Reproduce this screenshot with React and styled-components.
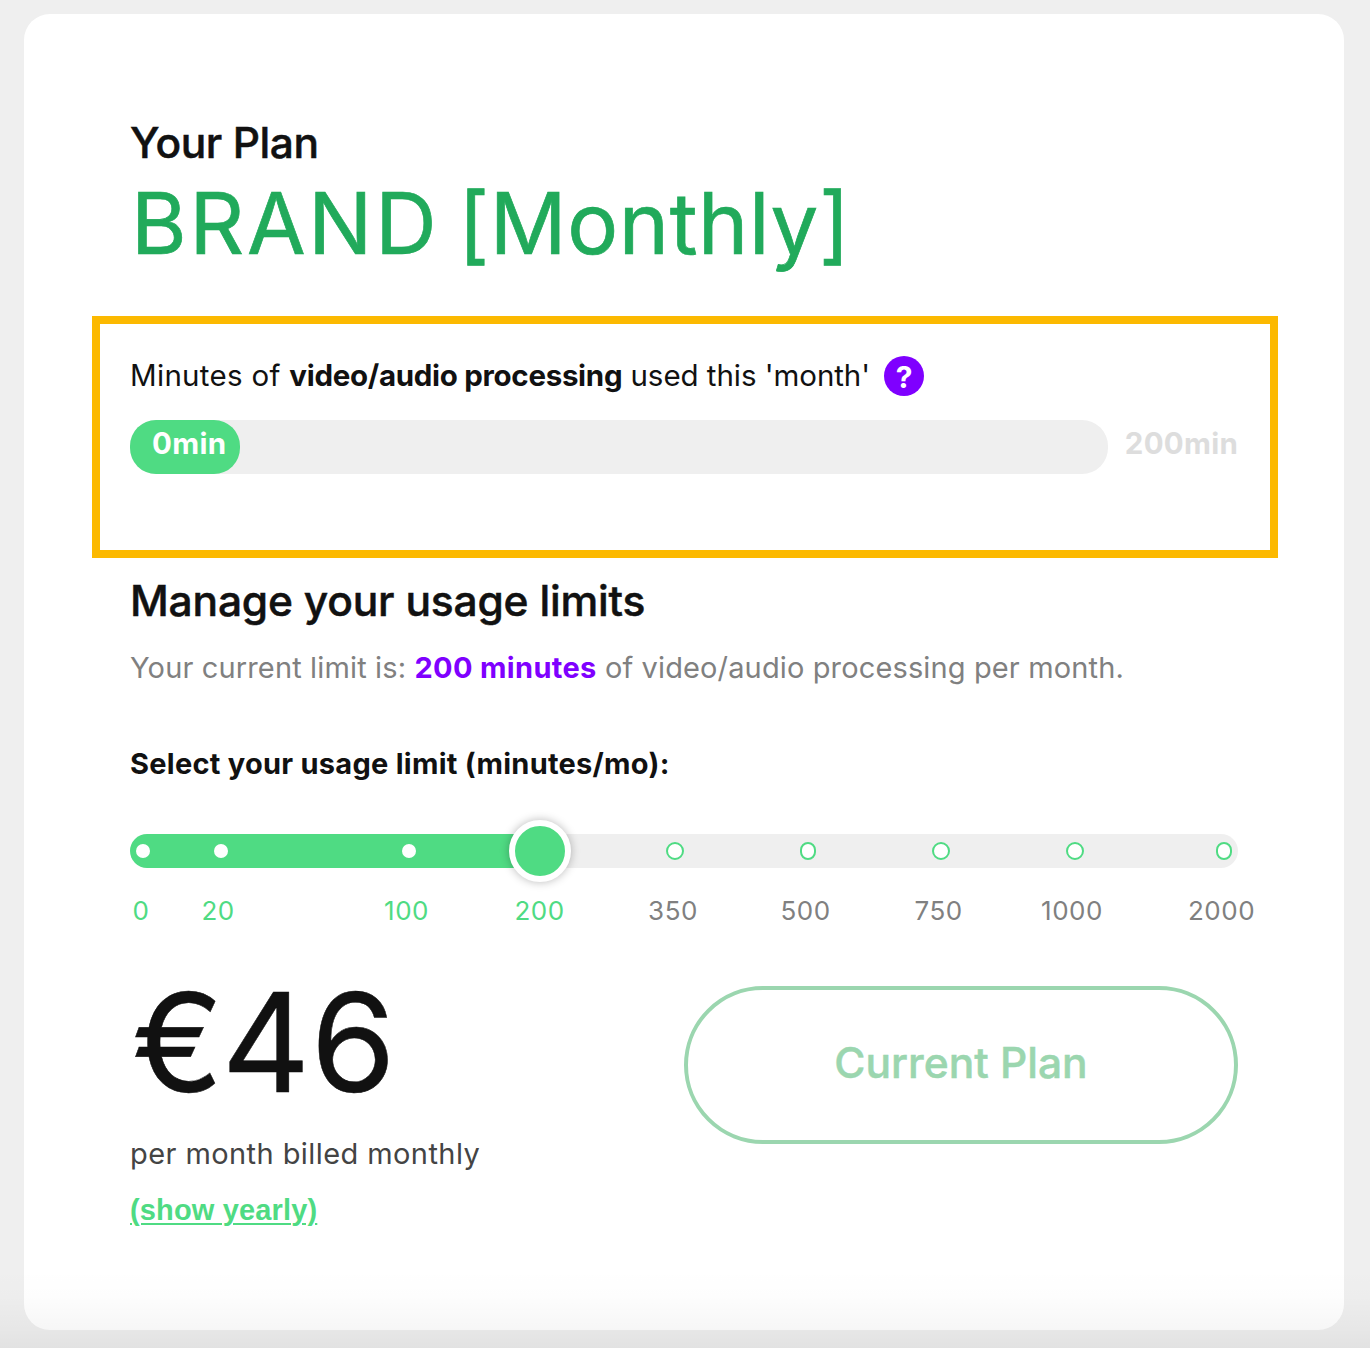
import React from "react";
import styled, { createGlobalStyle } from "styled-components";

const GlobalStyle = createGlobalStyle`
  *, *::before, *::after { box-sizing: border-box; }
  body {
    margin: 0;
    background: #efefef;
    color: #111;
    font-family: Inter, "Liberation Sans", sans-serif;
  }
`;

const Page = styled.main`
  position: relative;
  width: 1370px;
  height: 1348px;
  padding: 14px 26px 18px 24px;
  overflow: hidden;

  &::after {
    content: "";
    position: absolute;
    inset: auto 0 0;
    height: 80px;
    pointer-events: none;
    background: linear-gradient(
      rgba(0, 0, 0, 0),
      rgba(0, 0, 0, 0.007) 35%,
      rgba(0, 0, 0, 0.035) 78%,
      rgba(0, 0, 0, 0.056)
    );
  }
`;

const Card = styled.section`
  display: flex;
  flex-direction: column;
  height: 1316px;
  padding: 104px 106px 0;
  border-radius: 26px;
  background: #fff;
`;

const Text = styled.p`
  margin: 0;
  white-space: nowrap;
  font-size: ${(p) => p.$size}px;
  line-height: ${(p) => p.$line}px;
  font-weight: ${(p) => p.$weight || 400};
  letter-spacing: ${(p) => p.$track || 0}px;
  color: ${(p) => p.$color || "#111"};
  -webkit-text-stroke: ${(p) => p.$stroke || 0}px currentColor;
`;

const Run = styled.span`
  font-weight: ${(p) => p.$weight || "inherit"};
  letter-spacing: ${(p) => p.$track || 0}px;
  color: ${(p) => p.$color || "inherit"};
`;

const PlanName = styled(Text)`
  margin-top: 7px;
  padding-left: 1px;
`;

const UsageBox = styled.section`
  display: flex;
  flex-direction: column;
  width: 1186px;
  height: 242px;
  margin: 43px 0 0 -38px;
  padding: 32px 30px 0;
  border: 8px solid #fcb900;
`;

const UsageHeading = styled.div`
  display: flex;
  align-items: flex-start;
  gap: 14px;
  height: 40px;
`;

const Help = styled.button`
  display: flex;
  align-items: center;
  justify-content: center;
  width: 40px;
  height: 40px;
  padding: 2px 0 0;
  border: 0;
  border-radius: 50%;
  background: #7f00ff;
  color: #fff;
  font: 700 30px/38px Inter, sans-serif;
`;

const UsageRow = styled.div`
  display: flex;
  justify-content: space-between;
  width: 1108px;
  margin-top: 24px;
`;

const Meter = styled.div`
  width: 978px;
  height: 54px;
  border-radius: 26px;
  background: #efefef;
`;

const MeterFill = styled.div`
  width: 110px;
  height: 54px;
  padding-left: 22px;
  border-radius: 26px;
  background: #4fdb83;
`;

const Hint = styled(Text)`
  margin-top: 4px;
`;

const FieldLabel = styled(Text)`
  margin-top: 56px;
`;

const Track = styled.div`
  display: flex;
  align-items: center;
  height: 34px;
  margin-top: 50px;
  border-radius: 17px;
  background: linear-gradient(to right, #4fdb83 410px, #efefef 410px);
`;

const Labels = styled.div`
  display: flex;
  height: 40px;
  margin-top: 23px;
`;

const Cell = styled.div`
  display: flex;
  align-items: center;
  justify-content: flex-end;
  flex: 0 0 ${(p) => p.$width}px;
`;

const Anchor = styled.div`
  display: flex;
  align-items: center;
  justify-content: center;
  width: 0;
`;

const Dot = styled.span`
  flex: none;
  width: ${(p) => p.$width}px;
  height: ${(p) => (p.$filled ? 14 : 18)}px;
  border: ${(p) => (p.$filled ? "0" : "2px solid #4fdb83")};
  border-radius: 9px;
  background: #fff;
`;

const Knob = styled.span`
  flex: none;
  width: 62px;
  height: 62px;
  border: 6px solid #fff;
  border-radius: 50%;
  background: #4fdb83;
  box-shadow: 0 0 10px rgba(0, 0, 0, 0.28);
`;

const Footer = styled.div`
  display: flex;
  justify-content: space-between;
  align-items: flex-start;
  margin-top: 55px;
`;

const Pricing = styled.div`
  display: flex;
  flex-direction: column;
  align-items: flex-start;
`;

const Price = styled(Text)`
  padding-left: 2px;
`;

const Period = styled(Text)`
  margin-top: 35px;
`;

const YearlyLink = styled.a`
  margin-top: 16px;
  color: #4fdb83;
  font: 700 29px/40px "Liberation Sans", Arial, sans-serif;
  letter-spacing: 0.15px;
  text-decoration: underline;
  text-decoration-thickness: 2px;
  text-underline-offset: 3px;
`;

const PlanButton = styled.button`
  display: flex;
  justify-content: center;
  width: 554px;
  height: 158px;
  padding: 44px 0 0;
  border: 4px solid #9bd6af;
  border-radius: 79px;
  background: #fff;
  font-family: inherit;
`;

const stops = [
  { label: "0", dot: 13, text: 11, width: 14 },
  { label: "20", dot: 91, text: 88, width: 14 },
  { label: "100", dot: 279, text: 276.5, width: 14 },
  { label: "200", dot: 410, text: 409.5, width: 62 },
  { label: "350", dot: 545, text: 543, width: 18 },
  { label: "500", dot: 678, text: 675.5, width: 16 },
  { label: "750", dot: 811, text: 808.5, width: 18 },
  { label: "1000", dot: 945, text: 942, width: 18 },
  { label: "2000", dot: 1094, text: 1091.5, width: 16 },
];
const current = 3;
const step = (key, i) => stops[i][key] - (i ? stops[i - 1][key] : 0);

export default function App() {
  return (
    <>
      <GlobalStyle />
      <Page>
        <Card>
          <Text as="h2" $size={42.5} $line={50} $weight={500} $track={-0.45} $stroke={0.5}>Your Plan</Text>
          <PlanName as="h1" $size={85} $line={98} $color="#21aa5b" $stroke={0.7}>
            <Run $track={2.8}>BRAND</Run>
            <Run $track={-5}> </Run>
            <Run $track={0.6}>[Monthly]</Run>
          </PlanName>

          <UsageBox>
            <UsageHeading>
              <Text $size={29.5} $line={38}>
                <Run $track={0.3}>Minutes of </Run>
                <Run $weight={700} $track={-0.3}>video/audio processing</Run>
                <Run $track={-0.05}> used this 'month'</Run>
              </Text>
              <Help aria-label="Help">?</Help>
            </UsageHeading>
            <UsageRow>
              <Meter>
                <MeterFill>
                  <Text $size={29.5} $line={47} $weight={700} $track={0.35} $color="#fff">0min</Text>
                </MeterFill>
              </Meter>
              <Text $size={29.5} $line={47} $weight={700} $track={0.25} $color="#ddd">200min</Text>
            </UsageRow>
          </UsageBox>

          <Text as="h2" $size={42.5} $line={86} $weight={500} $track={-0.2} $stroke={0.5}>Manage your usage limits</Text>
          <Hint $size={29} $line={40} $color="#808080">
            <Run $track={0.14}>Your current limit is: </Run>
            <Run $weight={700} $track={0.33} $color="#7f00ff">200 minutes</Run>
            <Run $track={0.13}> of video/audio processing per month.</Run>
          </Hint>
          <FieldLabel $size={29} $line={40} $weight={700} $track={0.26}>Select your usage limit (minutes/mo):</FieldLabel>

          <Track>
            {stops.map((s, i) => (
              <Cell key={s.label} $width={step("dot", i)}>
                <Anchor>
                  {i === current ? <Knob /> : <Dot $width={s.width} $filled={i < current} />}
                </Anchor>
              </Cell>
            ))}
          </Track>
          <Labels>
            {stops.map((s, i) => (
              <Cell key={s.label} $width={step("text", i)}>
                <Anchor>
                  <Text $size={26} $line={40} $track={0.5} $color={i <= current ? "#4fdb83" : "#808080"}>{s.label}</Text>
                </Anchor>
              </Cell>
            ))}
          </Labels>

          <Footer>
            <Pricing>
              <Price $size={137} $line={113} $stroke={0.5}>
                <Run $track={-1.5}>€</Run>
                <Run $track={0.5}>46</Run>
              </Price>
              <Period $size={29} $line={40} $track={0.42} $color="#444">per month billed monthly</Period>
              <YearlyLink>(show yearly)</YearlyLink>
            </Pricing>
            <PlanButton>
              <Text as="span" $size={42.5} $line={58} $weight={500} $stroke={0.5} $color="#9bd6af">Current Plan</Text>
            </PlanButton>
          </Footer>
        </Card>
      </Page>
    </>
  );
}
